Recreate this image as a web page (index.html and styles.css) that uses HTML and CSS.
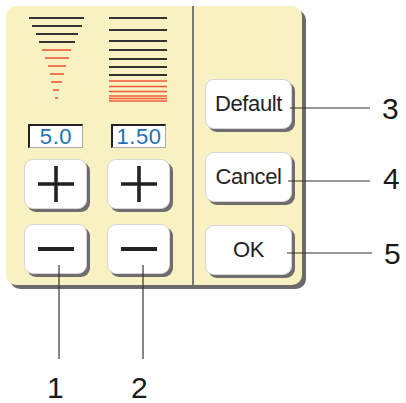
FILE: index.html
```html
<!DOCTYPE html>
<html>
<head>
<meta charset="utf-8">
<link rel="stylesheet" href="styles.css">
</head>
<body>
<div class="stage">
  <div class="panel">
    <div class="left">
      <div class="col">
        <svg class="icon" width="63" height="92" viewBox="0 0 63 92">
          <g stroke="#333" stroke-width="2.2">
            <line x1="5" y1="6" x2="60" y2="6"/>
            <line x1="8" y1="14" x2="58" y2="14"/>
            <line x1="12" y1="22" x2="54" y2="22"/>
            <line x1="15" y1="30" x2="51" y2="30"/>
          </g>
          <g stroke="#f2583a" stroke-width="1.6">
            <line x1="18" y1="38" x2="47" y2="38"/>
            <line x1="21" y1="46" x2="45" y2="46"/>
            <line x1="24" y1="54" x2="42" y2="54"/>
            <line x1="26" y1="62" x2="40" y2="62"/>
            <line x1="27" y1="70" x2="38" y2="70"/>
            <line x1="29" y1="78" x2="35" y2="78"/>
            <line x1="31" y1="86" x2="34" y2="86"/>
          </g>
        </svg>
        <div class="field">5.0</div>
        <div class="btn sq plus">
          <svg width="36" height="36" viewBox="0 0 36 36"><g stroke="#222" stroke-width="3.6"><line x1="0" y1="18" x2="36" y2="18"/><line x1="18" y1="0" x2="18" y2="36"/></g></svg>
        </div>
        <div class="btn sq minus">
          <svg width="36" height="6" viewBox="0 0 36 6"><line x1="0" y1="3" x2="36" y2="3" stroke="#222" stroke-width="3.8"/></svg>
        </div>
      </div>
      <div class="col">
        <svg class="icon" width="63" height="92" viewBox="0 0 63 92">
          <g stroke="#333" stroke-width="2.2">
            <line x1="2" y1="6" x2="60" y2="6"/>
            <line x1="2" y1="18" x2="60" y2="18"/>
            <line x1="2" y1="29" x2="60" y2="29"/>
            <line x1="2" y1="38" x2="60" y2="38"/>
            <line x1="2" y1="47" x2="60" y2="47"/>
            <line x1="2" y1="55" x2="60" y2="55"/>
            <line x1="2" y1="63" x2="60" y2="63"/>
          </g>
          <g stroke="#f2583a" stroke-width="1.5">
            <line x1="2" y1="69" x2="60" y2="69"/>
            <line x1="2" y1="74.5" x2="60" y2="74.5"/>
            <line x1="2" y1="79.5" x2="60" y2="79.5"/>
            <line x1="2" y1="84" x2="60" y2="84"/>
            <line x1="2" y1="86.5" x2="60" y2="86.5"/>
            <line x1="2" y1="89" x2="60" y2="89"/>
          </g>
        </svg>
        <div class="field">1.50</div>
        <div class="btn sq plus">
          <svg width="36" height="36" viewBox="0 0 36 36"><g stroke="#222" stroke-width="3.6"><line x1="0" y1="18" x2="36" y2="18"/><line x1="18" y1="0" x2="18" y2="36"/></g></svg>
        </div>
        <div class="btn sq minus">
          <svg width="36" height="6" viewBox="0 0 36 6"><line x1="0" y1="3" x2="36" y2="3" stroke="#222" stroke-width="3.8"/></svg>
        </div>
      </div>
    </div>
    <div class="right">
      <div class="btn wide">Default</div>
      <div class="btn wide">Cancel</div>
      <div class="btn wide">OK</div>
    </div>
  </div>

  <svg class="callouts" width="406" height="403" viewBox="0 0 406 403">
    <g stroke="#333" stroke-width="1.2">
      <line x1="290" y1="108" x2="370" y2="108"/>
      <line x1="288" y1="181" x2="370" y2="181"/>
      <line x1="287" y1="253" x2="372" y2="253"/>
      <line x1="59" y1="265" x2="59" y2="359"/>
      <line x1="143" y1="265" x2="143" y2="359"/>
    </g>
  </svg>
  <span class="num n1">1</span>
  <span class="num n2">2</span>
  <span class="num n3">3</span>
  <span class="num n4">4</span>
  <span class="num n5">5</span>
</div>
</body>
</html>
```

FILE: styles.css
```css
* { box-sizing: border-box; }
html, body { margin: 0; padding: 0; background: #fff; }
body { font-family: "Liberation Sans", Arial, sans-serif; color: #222; }

.stage {
  position: relative;
  width: 406px;
  height: 403px;
  padding: 6px 0 0 6px;
}

.panel {
  display: flex;
  width: 296px;
  height: 279px;
  background: #f8f1c1;
  border-radius: 10px;
  box-shadow: 4px 4px 0 #6b6b6b;
}

.left {
  width: 188px;
  border-right: 2px solid #7a7a7a;
  padding: 6px 0 0 18px;
  display: grid;
  grid-template-columns: 63px 63px;
  column-gap: 20px;
  align-content: start;
}

.col {
  display: flex;
  flex-direction: column;
  align-items: center;
}

.icon { display: block; }

.field {
  margin-top: 20px;
  width: 55px;
  height: 24px;
  background: #fff;
  border-top: 2px solid #222;
  border-left: 2px solid #222;
  border-right: 1px solid #a8a8a8;
  border-bottom: 1px solid #a8a8a8;
  color: #1c72b8;
  font-size: 22px;
  letter-spacing: 0.6px;
  line-height: 21px;
  text-align: center;
  white-space: nowrap;
}

.btn {
  background: #fff;
  border: 1px solid #d6d6d6;
  border-radius: 9px;
  box-shadow: 3px 3px 0 #6e6e6e;
  display: flex;
  align-items: center;
  justify-content: center;
}

.sq { width: 63px; height: 50px; }
.sq svg { display: block; }
.plus { margin-top: 11px; }
.minus { margin-top: 15px; }

.right {
  flex: 1;
  padding: 73px 0 0 11px;
  display: flex;
  flex-direction: column;
  gap: 23px;
}

.wide {
  width: 87px;
  height: 50px;
  font-size: 22px;
  letter-spacing: -0.4px;
  color: #222;
}

.callouts {
  position: absolute;
  left: 0;
  top: 0;
  pointer-events: none;
}

.num {
  position: absolute;
  font-size: 30px;
  line-height: 30px;
  color: #1a1a1a;
}
.n1 { left: 47px; top: 373px; }
.n2 { left: 131px; top: 373px; }
.n3 { left: 382px; top: 94px; }
.n4 { left: 383px; top: 164px; }
.n5 { left: 384px; top: 239px; }
```
